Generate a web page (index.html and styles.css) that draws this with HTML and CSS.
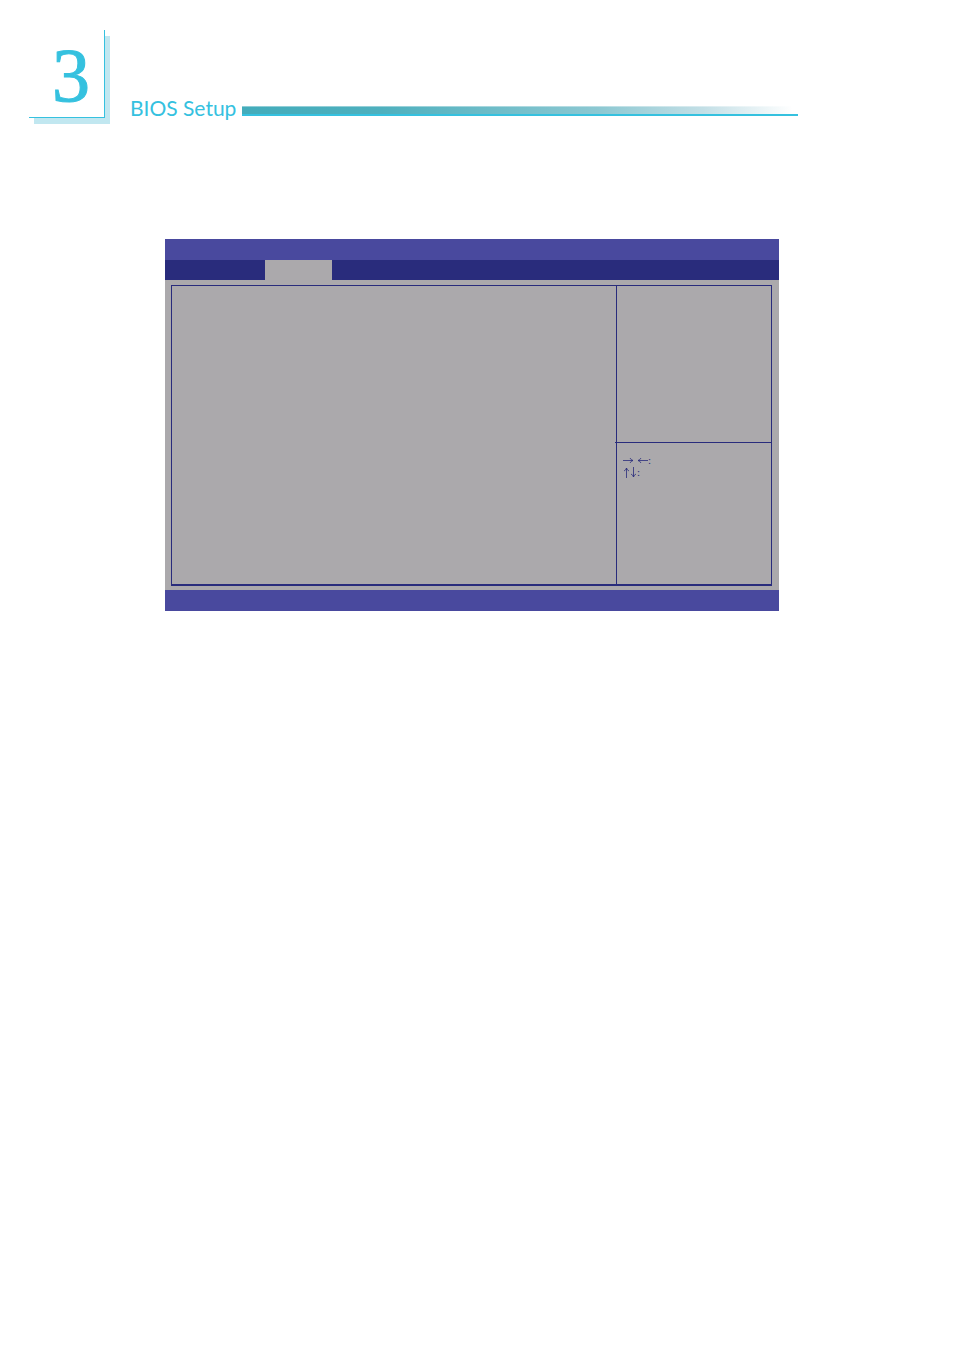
FILE: index.html
```
<!DOCTYPE html>
<html lang="en">
<head>
    <meta charset="UTF-8">
    <meta name="viewport" content="width=device-width, initial-scale=1.0">
    <title>BIOS Setup</title>
    <link rel="stylesheet" href="styles.css">
</head>
<body>
    <header class="chapter">
        <div class="chapter-number">3</div>
        <h1>BIOS Setup</h1>
        <div class="chapter-rule"></div>
    </header>

    <main class="bios">
        <div class="bios-title"></div>
        <div class="bios-tabs">
            <div class="tab-active"></div>
        </div>
        <div class="bios-body">
            <div class="bios-frame">
                <section class="settings"></section>
                <aside class="side">
                    <div class="help"></div>
                    <div class="keys">
                        <p class="keys-wide">
                            <svg width="11" height="7" viewBox="0 0 11 7" role="img" aria-label="Right"><path d="M0 3.5H10M7 1Q8 3 10 3.5Q8 4 7 6"/></svg>
                            <svg width="11" height="7" viewBox="0 0 11 7" role="img" aria-label="Left"><path d="M11 3.5H1M4 1Q3 3 1 3.5Q3 4 4 6"/></svg><span>:</span>
                        </p>
                        <p>
                            <svg width="7" height="11" viewBox="0 0 7 11" role="img" aria-label="Up"><path d="M3.5 11V1M1 4Q3 3 3.5 1Q4 3 6 4"/></svg>
                            <svg width="7" height="11" viewBox="0 0 7 11" role="img" aria-label="Down"><path d="M3.5 0V10M1 7Q3 8 3.5 10Q4 8 6 7"/></svg><span>:</span>
                        </p>
                    </div>
                </aside>
            </div>
        </div>
        <div class="bios-footer"></div>
    </main>
</body>
</html>
```

FILE: styles.css
```
* {
    box-sizing: border-box;
}
body {
    margin: 0;
    background-color: #fff;
    font-family: Lato, sans-serif;
}

/* Chapter heading */
.chapter {
    display: flex;
    align-items: flex-end;
    padding: 30px 156px 0 29px;
    color: #35c1df;
}
.chapter-number {
    width: 76px;
    height: 88px;
    padding-left: 9px;
    border-right: 1px solid #35c1df;
    border-bottom: 1px solid #35c1df;
    box-shadow: 5px 6px 0 #c1e7f0;
    background-color: #fff;
    font-family: "Liberation Serif", serif;
    font-size: 76px;
    line-height: 90px;
    text-align: center;
    -webkit-text-stroke: 1px #35c1df;
}
h1 {
    width: 112px;
    margin: 0 0 0 25px;
    font-size: 21px;
    font-weight: normal;
    line-height: 20px;
    white-space: nowrap;
}
.chapter-rule {
    flex: 1;
    height: 10px;
    margin-bottom: 2px;
    border-top: 1px solid rgba(255, 255, 255, 0.4);
    border-bottom: 2px solid #35c1df;
    background: linear-gradient(to right, #43acbb, #4eb0be 25%, #8cc8d2 64%, #c3dfe6 83%, #fff 99%);
}

/* BIOS screen */
.bios {
    margin: 121px 175px 0 165px;
}
.bios-title,
.bios-footer {
    height: 21px;
    background-color: #49499e;
}
.bios-tabs {
    height: 20px;
    padding-left: 100px;
    background-color: #292c7c;
}
.tab-active {
    width: 67px;
    height: 20px;
    background-color: #aba9ac;
}
.bios-body {
    padding: 5px 7px 4px 6px;
    background-color: #aba9ac;
}
.bios-frame {
    display: flex;
    min-height: 301px;
    border: 1px solid #292c7c;
    border-bottom-width: 2px;
}
.settings {
    flex: 1;
}
.side {
    width: 155px;
    border-left: 1px solid #292c7c;
}
.help {
    height: 157px;
    margin-left: -2px;
    border-bottom: 1px solid #292c7c;
}
.keys {
    padding: 11px 6px;
    color: #292c7c;
    font-family: "Liberation Serif", serif;
    font-size: 11px;
    line-height: 12px;
}
.keys p {
    display: flex;
    align-items: center;
    height: 12px;
    margin: 0;
}
.keys-wide {
    gap: 3px;
}
.keys-wide span {
    margin-left: -3px;
}
.keys svg {
    fill: none;
    stroke: #292c7c;
    stroke-width: 0.8;
}
```
